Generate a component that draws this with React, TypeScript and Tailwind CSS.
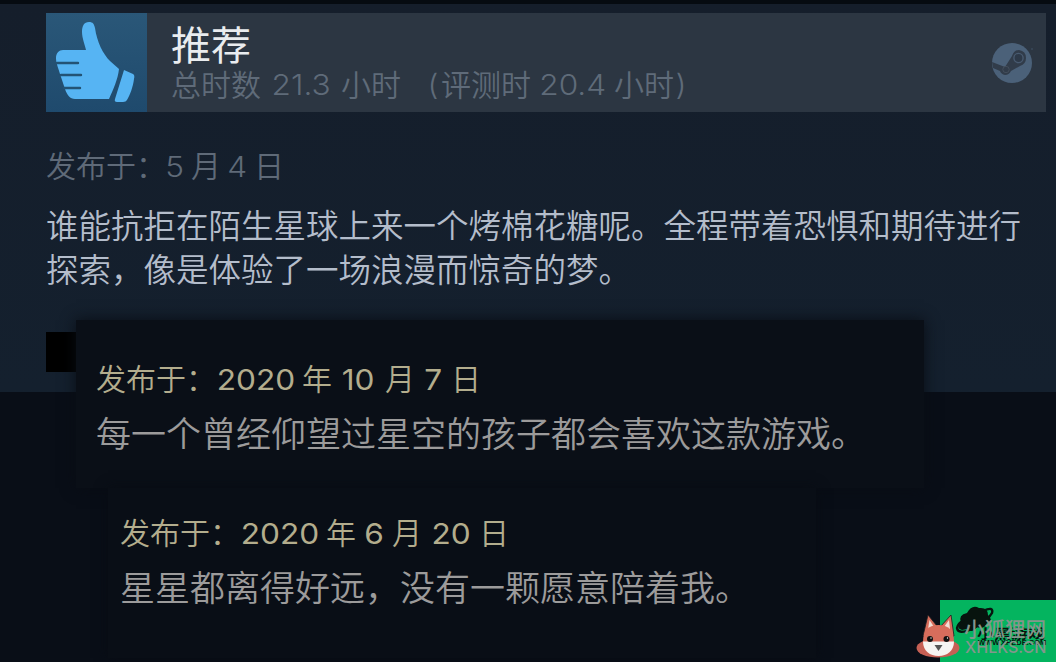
import type { ReactNode } from 'react'

const CJK = "font-['Noto_Sans_CJK_SC',sans-serif]"

// Latin digits sit in fixed slots between the Chinese characters
function Num({ w, children }: { w: string; children: ReactNode }) {
  return (
    <span className={`mt-[5px] inline-flex shrink-0 justify-center font-['Inter','Noto_Sans_CJK_SC',sans-serif] text-[29px] ${w}`}>
      <span className="inline-block scale-x-[1.09]">{children}</span>
    </span>
  )
}

function ThumbUp() {
  return (
    <svg viewBox="0 0 101 99" className="h-[99px] w-[101px] shrink-0">
      <defs>
        <linearGradient id="thumb-bg" x1="0" y1="0" x2="0" y2="1">
          <stop offset="0" stopColor="#2a5778" />
          <stop offset="1" stopColor="#1f4a6d" />
        </linearGradient>
      </defs>
      <rect width="101" height="99" fill="url(#thumb-bg)" />
      <path
        d="M17 37H40C39 32 36 25 36 19C36 13 38 9 43 9C47 9 48 11 49 15C51 29 57 41 64 48L73 56C72 66 67 77 63 86H29C24 86 21 82 19 76L14 61C12 54 10 50 10 45C10 40 13 37 17 37Z"
        fill="#56b4f3"
      />
      <path d="M11 50H32M15 62H35M18 75H34" stroke="#235375" strokeWidth="2.4" strokeLinecap="round" />
      <path d="M78 57L87 61Q89 62 88 66C87 74 84 82 81 87Q80 89 77 89H71Q68 89 69 86Z" fill="#56b4f3" />
    </svg>
  )
}

function SteamLogo() {
  return (
    <svg viewBox="0 0 42 42" className="mr-[13px] h-[42px] w-[42px]">
      <circle cx="21" cy="21" r="20" fill="#4b6179" />
      <path d="M1 20L14 25L21 14Q23 8 28 8Q35 9 35 16Q35 22 29 24L20 29Q18 33 14 33Q10 32 9 29L2 26Z" fill="#313c4a" />
      <circle cx="27.5" cy="16" r="4.6" fill="#2d3948" stroke="#485a70" strokeWidth="1.4" />
      <circle cx="15" cy="27.5" r="3.2" fill="none" stroke="#434e5c" strokeWidth="1" />
      <circle cx="41" cy="7" r=".8" fill="#42546a" />
    </svg>
  )
}

function Fox() {
  return (
    <svg viewBox="0 0 44 44" className="absolute left-[916px] top-[614px] h-[44px] w-[44px]">
      <ellipse cx="22" cy="34" rx="21.5" ry="9.5" fill="#c66055" />
      <path d="M7 22L12 1L21 12H25L35 1L38 22Z" fill="#d76d5c" stroke="#1c1c20" strokeWidth=".8" />
      <path d="M12 15L13.500 6L18 13ZM34 15L33 6L28 13Z" fill="#f3ddd5" />
      <path d="M7 28C7 16 13 11 22.500 11S38 16 38 28C38 37 31 42 22.500 42S7 37 7 28Z" fill="#d76d5c" />
      <path d="M7 27.500H38C38 37 31 42 22.500 42S7 37 7 27.500Z" fill="#f6f4f2" />
      <circle cx="14" cy="25" r="3" fill="#111" />
      <circle cx="30.500" cy="25" r="3" fill="#111" />
      <circle cx="15" cy="24" r=".7" fill="#fff" />
      <circle cx="31.500" cy="24" r=".7" fill="#fff" />
      <path d="M18.500 31H26.500L22.500 37Z" fill="#555" />
    </svg>
  )
}

export default function App() {
  return (
    <div className={`relative h-[662px] w-[1056px] overflow-hidden bg-[#090e17] ${CJK}`}>
      <section className="h-[392px] border-t-4 border-[#060b11] bg-linear-to-b from-[#151e2b] to-[#14202e] pl-[46px] pt-[9px]">
        <header className="flex h-[99px] w-[1000px] items-center bg-[#2c3642]">
          <ThumbUp />
          <div className="ml-[24px] flex-1">
            <h1 className="-mt-px mb-px text-[40px] leading-[40px] text-[#e9ecef]">推荐</h1>
            <div className="flex h-[38px] items-center whitespace-pre text-[30px] font-[350] leading-[38px] text-[#5f6b79]">
              <span>总时数</span>
              <Num w="w-[80px]">21.3</Num>
              <span>小时</span>
              <Num w="w-[40px] pl-[24px]">(</Num>
              <span>评测时</span>
              <Num w="w-[83px]">20.4</Num>
              <span>小时</span>
              <Num w="w-[14px]">)</Num>
            </div>
          </div>
          <SteamLogo />
        </header>

        <div className="mt-[32px] flex h-[40px] items-center text-[30px] font-[350] leading-[40px] text-[#5f6a78]">
          <span>发布于：</span>
          <Num w="w-[25px] pr-[8px]">5</Num>
          <span>月</span>
          <Num w="w-[33px]">4</Num>
          <span>日</span>
        </div>
        <p className="mt-[18px] whitespace-nowrap text-[32.5px] font-[350] leading-[44px] text-[#b4bdcb]">
          谁能抗拒在陌生星球上来一个烤棉花糖呢。全程带着恐惧和期待进行
          <br />
          探索，像是体验了一场浪漫而惊奇的梦。
        </p>
        <div className="mt-[42px] h-[40px] w-[60px] bg-black" />
      </section>

      <section className="relative -mt-[72px] ml-[76px] h-[168px] w-[848px] bg-[#0a0f17] pl-[20px] pt-[36px] shadow-[0_0_14px_#090d14]">
        <div className="flex h-[42px] items-center text-[30px] font-[350] leading-[42px] text-[#b3ad8d]">
          <span>发布于：</span>
          <Num w="w-[80px] font-normal">2020</Num>
          <span className="ml-[6px]">年</span>
          <Num w="w-[53px] font-normal">10</Num>
          <span>月</span>
          <Num w="w-[36px] font-normal">7</Num>
          <span>日</span>
        </div>
        <p className="mt-[9px] whitespace-nowrap text-[35px] font-[350] leading-[50px] text-[#9c9b9b]">
          每一个曾经仰望过星空的孩子都会喜欢这款游戏。
        </p>
      </section>

      <section className="relative ml-[108px] h-[170px] w-[708px] bg-[#090e16] pl-[12px] pt-[22px] shadow-[0_0_12px_#080c13]">
        <div className="flex h-[42px] items-center text-[30px] font-[350] leading-[42px] text-[#b3ad8d]">
          <span>发布于：</span>
          <Num w="w-[79px] font-normal">2020</Num>
          <span className="ml-[7px]">年</span>
          <Num w="w-[36px] font-normal">6</Num>
          <span>月</span>
          <Num w="w-[57px] font-normal">20</Num>
          <span>日</span>
        </div>
        <p className="mt-[9px] whitespace-nowrap text-[35px] font-[350] leading-[50px] text-[#9c9b9b]">
          星星都离得好远，没有一颗愿意陪着我。
        </p>
      </section>

      {/* site watermark */}
      <div className="absolute bottom-0 right-0 h-[62px] w-[116px] bg-[#04b45f]">
        <svg viewBox="0 0 116 62" className="absolute inset-0 h-[62px] w-[116px]">
          <path d="M22 30Q15 28 21 22Q18 15 27 13Q32 4 39 8Q48 7 48 15Q54 20 47 23Q44 30 37 27Q32 34 27 29Z" fill="#07140e" />
          <path d="M43 11Q54 6 52 13Q47 22 32 29Q18 35 17 28Q18 23 24 20" fill="none" stroke="#07140e" strokeWidth="2.4" />
        </svg>
        <span className="absolute left-[37px] top-[24px] scale-y-75 whitespace-nowrap text-[17px] font-bold leading-[17px] text-[#07140e]">
          小黑游戏
        </span>
        <span className="absolute left-[38px] top-[39px] font-['Liberation_Sans',sans-serif] text-[7.5px] font-bold leading-[8px] text-[#07140e]">
          WWW.XHEDE.COM
        </span>
        <span className="absolute left-[24px] top-[17px] whitespace-nowrap text-[20.5px] font-medium leading-[22px] text-[#83968c]">
          小狐狸网
        </span>
        <span className="absolute left-[25px] top-[38px] font-['Inter',sans-serif] text-[16px] font-medium leading-[18px] text-[#83968c]">
          XHLKS.CN
        </span>
      </div>
      <Fox />
    </div>
  )
}
